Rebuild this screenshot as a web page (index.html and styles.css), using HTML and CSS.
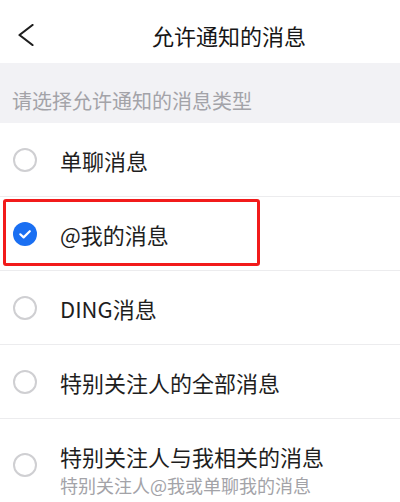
FILE: index.html
```html
<!DOCTYPE html>
<html lang="zh-CN">
<head>
<meta charset="utf-8">
<title>允许通知的消息</title>
<link rel="stylesheet" href="styles.css">
</head>
<body>
<div class="page">
  <header class="header">
    <svg class="back" width="16" height="22" viewBox="0 0 16 22" aria-hidden="true">
      <polyline points="14.5,1 1.5,11 14.5,21" fill="none" stroke="#1e1e1e" stroke-width="2.2" stroke-linecap="round" stroke-linejoin="round"/>
    </svg>
    <h1 class="title">允许通知的消息</h1>
  </header>
  <div class="hint">请选择允许通知的消息类型</div>
  <ul class="list">
    <li class="row">
      <span class="radio"></span>
      <span class="label">单聊消息</span>
    </li>
    <li class="row row-marked">
      <span class="radio radio-on">
        <svg width="24" height="24" viewBox="0 0 24 24" aria-hidden="true">
          <circle cx="12" cy="12" r="12" fill="#1a6ff2"/>
          <polyline points="7.3,12.3 10.6,15.4 16.8,9.2" fill="none" stroke="#fff" stroke-width="2.2" stroke-linecap="round" stroke-linejoin="round"/>
        </svg>
      </span>
      <span class="label">@我的消息</span>
      <span class="mark"></span>
    </li>
    <li class="row">
      <span class="radio"></span>
      <span class="label">DING消息</span>
    </li>
    <li class="row">
      <span class="radio"></span>
      <span class="label">特别关注人的全部消息</span>
    </li>
    <li class="row row-two">
      <span class="radio"></span>
      <span class="text">
        <span class="label">特别关注人与我相关的消息</span>
        <span class="sub">特别关注人@我或单聊我的消息</span>
      </span>
    </li>
  </ul>
</div>
</body>
</html>
```

FILE: styles.css
```css
* { box-sizing: border-box; }
html, body {
  margin: 0;
  padding: 0;
  background: #ffffff;
}
body {
  font-family: "Noto Sans CJK SC", "Noto Sans", sans-serif;
  color: #1e1e1e;
  width: 400px;
  height: 502px;
  overflow: hidden;
}
.header {
  height: 63px;
  display: flex;
  align-items: center;
  padding-left: 18px;
}
.back {
  display: block;
  margin-top: 6px;
}
.title {
  margin: 6px 0 0 118px;
  font-size: 22px;
  font-weight: 400;
  line-height: 26px;
  color: #161616;
}
.hint {
  height: 60px;
  background: #f2f2f5;
  padding: 28px 0 0 12px;
  font-size: 20px;
  line-height: 20px;
  color: #a3a3a8;
}
.list {
  list-style: none;
  margin: 0;
  padding: 0;
}
.row {
  position: relative;
  height: 74px;
  display: flex;
  align-items: center;
  padding-left: 13px;
  border-bottom: 1px solid #ececee;
}
.radio {
  flex: none;
  width: 24px;
  height: 24px;
  border: 2px solid #cfcfd2;
  border-radius: 50%;
  margin-right: 23px;
}
.radio-on {
  border: none;
}
.radio-on svg { display: block; }
.label {
  font-size: 22px;
  line-height: 26px;
  color: #1e1e1e;
}
.mark {
  position: absolute;
  left: 3px;
  top: 2px;
  width: 257px;
  height: 67px;
  border: 3px solid #f21b1b;
  border-radius: 3px;
}
.row-two {
  height: 84px;
  align-items: flex-start;
  border-bottom: none;
}
.row-two .radio {
  margin-top: 34px;
}
.text {
  display: flex;
  flex-direction: column;
  padding-top: 21px;
}
.text .label {
  line-height: 32px;
}
.sub {
  font-size: 18px;
  line-height: 26px;
  color: #a3a3a8;
}
```
